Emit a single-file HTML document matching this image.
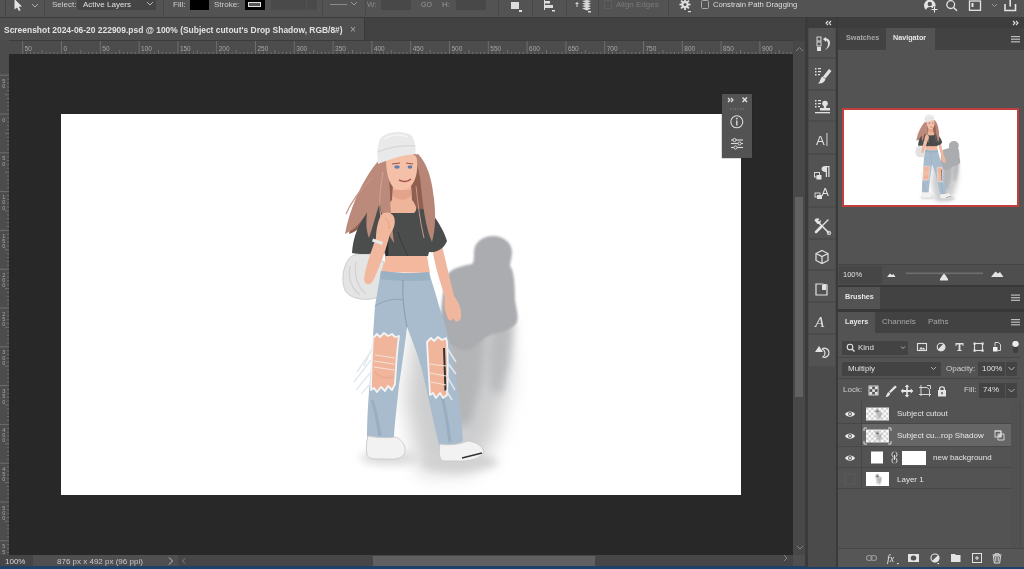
<!DOCTYPE html>
<html><head><meta charset="utf-8">
<style>
*{box-sizing:border-box;margin:0;padding:0}
html,body{width:1024px;height:569px;overflow:hidden;background:#535353;font-family:"Liberation Sans",sans-serif;color:#d6d6d6}
.a{position:absolute}
svg text{will-change:transform}
svg{will-change:transform}
.t{position:absolute;white-space:nowrap;font-size:8px;line-height:10px;will-change:transform}
</style></head><body>
<!-- options bar -->
<div class="a" style="left:0;top:0;width:1024px;height:18px;background:#535353"></div>
<div class="a" style="left:0;top:17px;width:1024px;height:1px;background:#3c3c3c"></div>
<!-- options content -->
<div class="a" style="left:5px;top:0;width:1px;height:16px;background:#444"></div>
<svg class="a" style="left:12px;top:0" width="14" height="12" viewBox="0 0 14 12"><path d="M2.5 -1 L2.5 9.5 L5 7.5 L7 11 L8.6 10.2 L6.8 6.8 L10 6.6 Z" fill="#e6e6e6"/></svg>
<svg class="a" style="left:31px;top:1px" width="8" height="8"><path d="M1 3 L4 6 L7 3" stroke="#b0b0b0" stroke-width="1" fill="none"/></svg>
<div class="a" style="left:44px;top:0;width:1px;height:16px;background:#484848"></div>
<div class="t" style="left:52px;top:0px;color:#d0d0d0">Select:</div>
<div class="a" style="left:77px;top:0;width:79px;height:10px;background:#454545"></div>
<div class="t" style="left:83px;top:0px;color:#e0e0e0">Active Layers</div>
<svg class="a" style="left:146px;top:0" width="8" height="8"><path d="M1 2 L4 5 L7 2" stroke="#b8b8b8" stroke-width="1" fill="none"/></svg>
<div class="a" style="left:163px;top:0;width:1px;height:16px;background:#484848"></div>
<div class="t" style="left:173px;top:0px;color:#d0d0d0">Fill:</div>
<div class="a" style="left:190px;top:0;width:19px;height:10px;background:#000"></div>
<div class="t" style="left:214px;top:0px;color:#d0d0d0">Stroke:</div>
<div class="a" style="left:245px;top:0;width:20px;height:10px;background:#000"></div>
<div class="a" style="left:248px;top:2px;width:13px;height:5px;border:1px solid #e0e0e0;background:#555"></div>
<div class="a" style="left:271px;top:0;width:35px;height:10px;background:#4a4a4a"></div>
<div class="a" style="left:307px;top:0;width:10px;height:10px;background:#4a4a4a"></div>
<div class="a" style="left:322px;top:0;width:1px;height:16px;background:#484848"></div>
<div class="a" style="left:330px;top:4px;width:17px;height:1px;background:#8a8a8a"></div>
<svg class="a" style="left:350px;top:0" width="8" height="8"><path d="M1 2 L4 5 L7 2" stroke="#9a9a9a" stroke-width="1" fill="none"/></svg>
<div class="a" style="left:365px;top:0;width:1px;height:16px;background:#484848"></div>
<div class="t" style="left:367px;top:0px;color:#8a8a8a">W:</div>
<div class="a" style="left:381px;top:0;width:30px;height:10px;background:#484848"></div>
<div class="t" style="left:421px;top:0px;color:#9a9a9a;font-size:7px">GO</div>
<div class="t" style="left:442px;top:0px;color:#9a9a9a">H:</div>
<div class="a" style="left:456px;top:0;width:30px;height:10px;background:#484848"></div>
<div class="a" style="left:498px;top:0;width:1px;height:16px;background:#484848"></div>
<div class="a" style="left:511px;top:2px;width:8px;height:7px;background:#dcdcdc"></div>
<div class="a" style="left:519px;top:10px;width:3px;height:2px;background:#ddd"></div>
<div class="a" style="left:532px;top:0;width:1px;height:16px;background:#484848"></div>
<svg class="a" style="left:543px;top:0" width="14" height="14"><g fill="#dcdcdc"><rect x="1" y="0" width="1" height="10"/><rect x="2" y="1" width="5" height="2.5"/><rect x="2" y="5" width="8" height="3"/><rect x="9" y="10" width="3" height="1.5"/></g></svg>
<div class="a" style="left:566px;top:0;width:1px;height:16px;background:#484848"></div>
<svg class="a" style="left:574px;top:0" width="18" height="14"><g fill="#d8d8d8"><path d="M1 4 L3 2 L5 4 Z"/><rect x="2.5" y="4" width="1" height="3"/><path d="M8 1 L13 0 L17 1 L13 3 Z"/><path d="M8 3.5 L13 2 L17 3.5 L13 5.5 Z"/><path d="M8 6 L13 4.5 L17 6 L13 8 Z"/><path d="M8 8.5 L13 7 L17 8.5 L13 10.5 Z"/><rect x="14" y="11" width="3" height="1.5"/></g></svg>
<div class="a" style="left:598px;top:0;width:1px;height:16px;background:#484848"></div>
<div class="a" style="left:604px;top:0;width:8px;height:9px;border:1px solid #5e5e5e;border-radius:1px"></div>
<div class="t" style="left:616px;top:0px;color:#7c7c7c">Align Edges</div>
<div class="a" style="left:668px;top:0;width:1px;height:16px;background:#484848"></div>
<svg class="a" style="left:679px;top:0" width="16" height="14"><g fill="#e0e0e0"><circle cx="6" cy="4.5" r="3.6"/><g stroke="#e0e0e0" stroke-width="1.8"><line x1="6" y1="-1" x2="6" y2="10"/><line x1="0.5" y1="4.5" x2="11.5" y2="4.5"/><line x1="2.1" y1="0.6" x2="9.9" y2="8.4"/><line x1="9.9" y1="0.6" x2="2.1" y2="8.4"/></g></g><circle cx="6" cy="4.5" r="1.5" fill="#535353"/><rect x="9" y="11" width="3" height="1.2" fill="#ddd"/></svg>
<div class="a" style="left:701px;top:0;width:8px;height:9px;border:1px solid #a8a8a8;border-radius:1.5px"></div>
<div class="t" style="left:713px;top:0px;color:#dedede;font-size:7.7px">Constrain Path Dragging</div>
<svg class="a" style="left:920px;top:0" width="104" height="14"><g fill="none" stroke="#e4e4e4" stroke-width="1.3">
<circle cx="30.7" cy="4.6" r="3.9" />
<line x1="33.5" y1="7.5" x2="37" y2="10.8" stroke-width="1.5"/>
<rect x="49.5" y="1" width="11" height="9.3"/>
<path d="M72 4 L74.5 6.5 L77 4" stroke="#9a9a9a" stroke-width="1"/>
<path d="M85 4 L85 10.5 L95.5 10.5 L95.5 4" stroke-width="1.6"/><line x1="90.2" y1="0" x2="90.2" y2="6.5" stroke-width="1.6"/>
</g><g fill="#e4e4e4"><circle cx="9.8" cy="5.5" r="5.8"/><rect x="51.5" y="3" width="2" height="4"/></g>
<g fill="#535353"><circle cx="9.8" cy="4" r="2.2"/><path d="M6 11.5 C6 8 8 7 9.8 7 C11.6 7 13.6 8 13.6 11.5 Z"/></g>
<path d="M14.5 6.5 L14.5 12.5 M11.5 9.5 L17.5 9.5" stroke="#535353" stroke-width="3"/><path d="M14.5 6.5 L14.5 12.5 M11.5 9.5 L17.5 9.5" stroke="#e4e4e4" stroke-width="1.1"/></svg>
<!-- doc tab bar -->
<div class="a" style="left:0;top:18px;width:806px;height:23px;background:#424242"></div>
<div class="a" style="left:0;top:18px;width:364px;height:22px;background:#4f4f4f"></div><div class="a" style="left:364px;top:18px;width:1px;height:22px;background:#393939"></div>
<div class="t" style="left:4px;top:25px;font-size:8.45px;font-weight:700;color:#e2e2e2;line-height:11px">Screenshot 2024-06-20 222909.psd @ 100% (Subject cutout's Drop Shadow, RGB/8#)</div>
<div class="t" style="left:350px;top:24px;font-size:10px;color:#a8a8a8;line-height:11px">×</div>
<div class="a" style="left:0;top:40px;width:793px;height:1px;background:#3c3c3c"></div>
<!-- rulers -->
<div class="a" style="left:0;top:41px;width:793px;height:13px;background:#4c4c4c"></div>
<div class="a" style="left:0;top:40px;width:9px;height:515px;background:#4c4c4c"></div>
<!-- canvas -->

<div class="a" style="left:9px;top:54px;width:784px;height:501px;background:#282828"></div>
<div class="a" style="left:61px;top:114px;width:680px;height:381px;background:#ffffff"></div>
<svg class="a" style="left:0;top:0" width="806" height="569"><g stroke="#7c7c7c" stroke-width="0.7"><line x1="22.7" y1="41" x2="22.7" y2="54"/><line x1="26.6" y1="52" x2="26.6" y2="54"/><line x1="30.5" y1="52" x2="30.5" y2="54"/><line x1="34.3" y1="52" x2="34.3" y2="54"/><line x1="38.2" y1="52" x2="38.2" y2="54"/><line x1="42.1" y1="50" x2="42.1" y2="54"/><line x1="46.0" y1="52" x2="46.0" y2="54"/><line x1="49.9" y1="52" x2="49.9" y2="54"/><line x1="53.7" y1="52" x2="53.7" y2="54"/><line x1="57.6" y1="52" x2="57.6" y2="54"/><line x1="61.5" y1="41" x2="61.5" y2="54"/><line x1="65.4" y1="52" x2="65.4" y2="54"/><line x1="69.3" y1="52" x2="69.3" y2="54"/><line x1="73.1" y1="52" x2="73.1" y2="54"/><line x1="77.0" y1="52" x2="77.0" y2="54"/><line x1="80.9" y1="50" x2="80.9" y2="54"/><line x1="84.8" y1="52" x2="84.8" y2="54"/><line x1="88.7" y1="52" x2="88.7" y2="54"/><line x1="92.5" y1="52" x2="92.5" y2="54"/><line x1="96.4" y1="52" x2="96.4" y2="54"/><line x1="100.3" y1="41" x2="100.3" y2="54"/><line x1="104.2" y1="52" x2="104.2" y2="54"/><line x1="108.1" y1="52" x2="108.1" y2="54"/><line x1="111.9" y1="52" x2="111.9" y2="54"/><line x1="115.8" y1="52" x2="115.8" y2="54"/><line x1="119.7" y1="50" x2="119.7" y2="54"/><line x1="123.6" y1="52" x2="123.6" y2="54"/><line x1="127.5" y1="52" x2="127.5" y2="54"/><line x1="131.3" y1="52" x2="131.3" y2="54"/><line x1="135.2" y1="52" x2="135.2" y2="54"/><line x1="139.1" y1="41" x2="139.1" y2="54"/><line x1="143.0" y1="52" x2="143.0" y2="54"/><line x1="146.9" y1="52" x2="146.9" y2="54"/><line x1="150.7" y1="52" x2="150.7" y2="54"/><line x1="154.6" y1="52" x2="154.6" y2="54"/><line x1="158.5" y1="50" x2="158.5" y2="54"/><line x1="162.4" y1="52" x2="162.4" y2="54"/><line x1="166.3" y1="52" x2="166.3" y2="54"/><line x1="170.1" y1="52" x2="170.1" y2="54"/><line x1="174.0" y1="52" x2="174.0" y2="54"/><line x1="177.9" y1="41" x2="177.9" y2="54"/><line x1="181.8" y1="52" x2="181.8" y2="54"/><line x1="185.7" y1="52" x2="185.7" y2="54"/><line x1="189.5" y1="52" x2="189.5" y2="54"/><line x1="193.4" y1="52" x2="193.4" y2="54"/><line x1="197.3" y1="50" x2="197.3" y2="54"/><line x1="201.2" y1="52" x2="201.2" y2="54"/><line x1="205.1" y1="52" x2="205.1" y2="54"/><line x1="208.9" y1="52" x2="208.9" y2="54"/><line x1="212.8" y1="52" x2="212.8" y2="54"/><line x1="216.7" y1="41" x2="216.7" y2="54"/><line x1="220.6" y1="52" x2="220.6" y2="54"/><line x1="224.5" y1="52" x2="224.5" y2="54"/><line x1="228.3" y1="52" x2="228.3" y2="54"/><line x1="232.2" y1="52" x2="232.2" y2="54"/><line x1="236.1" y1="50" x2="236.1" y2="54"/><line x1="240.0" y1="52" x2="240.0" y2="54"/><line x1="243.9" y1="52" x2="243.9" y2="54"/><line x1="247.7" y1="52" x2="247.7" y2="54"/><line x1="251.6" y1="52" x2="251.6" y2="54"/><line x1="255.5" y1="41" x2="255.5" y2="54"/><line x1="259.4" y1="52" x2="259.4" y2="54"/><line x1="263.3" y1="52" x2="263.3" y2="54"/><line x1="267.1" y1="52" x2="267.1" y2="54"/><line x1="271.0" y1="52" x2="271.0" y2="54"/><line x1="274.9" y1="50" x2="274.9" y2="54"/><line x1="278.8" y1="52" x2="278.8" y2="54"/><line x1="282.7" y1="52" x2="282.7" y2="54"/><line x1="286.5" y1="52" x2="286.5" y2="54"/><line x1="290.4" y1="52" x2="290.4" y2="54"/><line x1="294.3" y1="41" x2="294.3" y2="54"/><line x1="298.2" y1="52" x2="298.2" y2="54"/><line x1="302.1" y1="52" x2="302.1" y2="54"/><line x1="305.9" y1="52" x2="305.9" y2="54"/><line x1="309.8" y1="52" x2="309.8" y2="54"/><line x1="313.7" y1="50" x2="313.7" y2="54"/><line x1="317.6" y1="52" x2="317.6" y2="54"/><line x1="321.5" y1="52" x2="321.5" y2="54"/><line x1="325.3" y1="52" x2="325.3" y2="54"/><line x1="329.2" y1="52" x2="329.2" y2="54"/><line x1="333.1" y1="41" x2="333.1" y2="54"/><line x1="337.0" y1="52" x2="337.0" y2="54"/><line x1="340.9" y1="52" x2="340.9" y2="54"/><line x1="344.7" y1="52" x2="344.7" y2="54"/><line x1="348.6" y1="52" x2="348.6" y2="54"/><line x1="352.5" y1="50" x2="352.5" y2="54"/><line x1="356.4" y1="52" x2="356.4" y2="54"/><line x1="360.3" y1="52" x2="360.3" y2="54"/><line x1="364.1" y1="52" x2="364.1" y2="54"/><line x1="368.0" y1="52" x2="368.0" y2="54"/><line x1="371.9" y1="41" x2="371.9" y2="54"/><line x1="375.8" y1="52" x2="375.8" y2="54"/><line x1="379.7" y1="52" x2="379.7" y2="54"/><line x1="383.5" y1="52" x2="383.5" y2="54"/><line x1="387.4" y1="52" x2="387.4" y2="54"/><line x1="391.3" y1="50" x2="391.3" y2="54"/><line x1="395.2" y1="52" x2="395.2" y2="54"/><line x1="399.1" y1="52" x2="399.1" y2="54"/><line x1="402.9" y1="52" x2="402.9" y2="54"/><line x1="406.8" y1="52" x2="406.8" y2="54"/><line x1="410.7" y1="41" x2="410.7" y2="54"/><line x1="414.6" y1="52" x2="414.6" y2="54"/><line x1="418.5" y1="52" x2="418.5" y2="54"/><line x1="422.3" y1="52" x2="422.3" y2="54"/><line x1="426.2" y1="52" x2="426.2" y2="54"/><line x1="430.1" y1="50" x2="430.1" y2="54"/><line x1="434.0" y1="52" x2="434.0" y2="54"/><line x1="437.9" y1="52" x2="437.9" y2="54"/><line x1="441.7" y1="52" x2="441.7" y2="54"/><line x1="445.6" y1="52" x2="445.6" y2="54"/><line x1="449.5" y1="41" x2="449.5" y2="54"/><line x1="453.4" y1="52" x2="453.4" y2="54"/><line x1="457.3" y1="52" x2="457.3" y2="54"/><line x1="461.1" y1="52" x2="461.1" y2="54"/><line x1="465.0" y1="52" x2="465.0" y2="54"/><line x1="468.9" y1="50" x2="468.9" y2="54"/><line x1="472.8" y1="52" x2="472.8" y2="54"/><line x1="476.7" y1="52" x2="476.7" y2="54"/><line x1="480.5" y1="52" x2="480.5" y2="54"/><line x1="484.4" y1="52" x2="484.4" y2="54"/><line x1="488.3" y1="41" x2="488.3" y2="54"/><line x1="492.2" y1="52" x2="492.2" y2="54"/><line x1="496.1" y1="52" x2="496.1" y2="54"/><line x1="499.9" y1="52" x2="499.9" y2="54"/><line x1="503.8" y1="52" x2="503.8" y2="54"/><line x1="507.7" y1="50" x2="507.7" y2="54"/><line x1="511.6" y1="52" x2="511.6" y2="54"/><line x1="515.5" y1="52" x2="515.5" y2="54"/><line x1="519.3" y1="52" x2="519.3" y2="54"/><line x1="523.2" y1="52" x2="523.2" y2="54"/><line x1="527.1" y1="41" x2="527.1" y2="54"/><line x1="531.0" y1="52" x2="531.0" y2="54"/><line x1="534.9" y1="52" x2="534.9" y2="54"/><line x1="538.7" y1="52" x2="538.7" y2="54"/><line x1="542.6" y1="52" x2="542.6" y2="54"/><line x1="546.5" y1="50" x2="546.5" y2="54"/><line x1="550.4" y1="52" x2="550.4" y2="54"/><line x1="554.3" y1="52" x2="554.3" y2="54"/><line x1="558.1" y1="52" x2="558.1" y2="54"/><line x1="562.0" y1="52" x2="562.0" y2="54"/><line x1="565.9" y1="41" x2="565.9" y2="54"/><line x1="569.8" y1="52" x2="569.8" y2="54"/><line x1="573.7" y1="52" x2="573.7" y2="54"/><line x1="577.5" y1="52" x2="577.5" y2="54"/><line x1="581.4" y1="52" x2="581.4" y2="54"/><line x1="585.3" y1="50" x2="585.3" y2="54"/><line x1="589.2" y1="52" x2="589.2" y2="54"/><line x1="593.1" y1="52" x2="593.1" y2="54"/><line x1="596.9" y1="52" x2="596.9" y2="54"/><line x1="600.8" y1="52" x2="600.8" y2="54"/><line x1="604.7" y1="41" x2="604.7" y2="54"/><line x1="608.6" y1="52" x2="608.6" y2="54"/><line x1="612.5" y1="52" x2="612.5" y2="54"/><line x1="616.3" y1="52" x2="616.3" y2="54"/><line x1="620.2" y1="52" x2="620.2" y2="54"/><line x1="624.1" y1="50" x2="624.1" y2="54"/><line x1="628.0" y1="52" x2="628.0" y2="54"/><line x1="631.9" y1="52" x2="631.9" y2="54"/><line x1="635.7" y1="52" x2="635.7" y2="54"/><line x1="639.6" y1="52" x2="639.6" y2="54"/><line x1="643.5" y1="41" x2="643.5" y2="54"/><line x1="647.4" y1="52" x2="647.4" y2="54"/><line x1="651.3" y1="52" x2="651.3" y2="54"/><line x1="655.1" y1="52" x2="655.1" y2="54"/><line x1="659.0" y1="52" x2="659.0" y2="54"/><line x1="662.9" y1="50" x2="662.9" y2="54"/><line x1="666.8" y1="52" x2="666.8" y2="54"/><line x1="670.7" y1="52" x2="670.7" y2="54"/><line x1="674.5" y1="52" x2="674.5" y2="54"/><line x1="678.4" y1="52" x2="678.4" y2="54"/><line x1="682.3" y1="41" x2="682.3" y2="54"/><line x1="686.2" y1="52" x2="686.2" y2="54"/><line x1="690.1" y1="52" x2="690.1" y2="54"/><line x1="693.9" y1="52" x2="693.9" y2="54"/><line x1="697.8" y1="52" x2="697.8" y2="54"/><line x1="701.7" y1="50" x2="701.7" y2="54"/><line x1="705.6" y1="52" x2="705.6" y2="54"/><line x1="709.5" y1="52" x2="709.5" y2="54"/><line x1="713.3" y1="52" x2="713.3" y2="54"/><line x1="717.2" y1="52" x2="717.2" y2="54"/><line x1="721.1" y1="41" x2="721.1" y2="54"/><line x1="725.0" y1="52" x2="725.0" y2="54"/><line x1="728.9" y1="52" x2="728.9" y2="54"/><line x1="732.7" y1="52" x2="732.7" y2="54"/><line x1="736.6" y1="52" x2="736.6" y2="54"/><line x1="740.5" y1="50" x2="740.5" y2="54"/><line x1="744.4" y1="52" x2="744.4" y2="54"/><line x1="748.3" y1="52" x2="748.3" y2="54"/><line x1="752.1" y1="52" x2="752.1" y2="54"/><line x1="756.0" y1="52" x2="756.0" y2="54"/><line x1="759.9" y1="41" x2="759.9" y2="54"/><line x1="763.8" y1="52" x2="763.8" y2="54"/><line x1="767.7" y1="52" x2="767.7" y2="54"/><line x1="771.5" y1="52" x2="771.5" y2="54"/><line x1="775.4" y1="52" x2="775.4" y2="54"/><line x1="779.3" y1="50" x2="779.3" y2="54"/><line x1="783.2" y1="52" x2="783.2" y2="54"/><line x1="787.1" y1="52" x2="787.1" y2="54"/><line x1="790.9" y1="52" x2="790.9" y2="54"/><line x1="0" y1="75.2" x2="9" y2="75.2"/><line x1="7" y1="79.1" x2="9" y2="79.1"/><line x1="7" y1="83.0" x2="9" y2="83.0"/><line x1="7" y1="86.8" x2="9" y2="86.8"/><line x1="7" y1="90.7" x2="9" y2="90.7"/><line x1="5" y1="94.6" x2="9" y2="94.6"/><line x1="7" y1="98.5" x2="9" y2="98.5"/><line x1="7" y1="102.4" x2="9" y2="102.4"/><line x1="7" y1="106.2" x2="9" y2="106.2"/><line x1="7" y1="110.1" x2="9" y2="110.1"/><line x1="0" y1="114.0" x2="9" y2="114.0"/><line x1="7" y1="117.9" x2="9" y2="117.9"/><line x1="7" y1="121.8" x2="9" y2="121.8"/><line x1="7" y1="125.6" x2="9" y2="125.6"/><line x1="7" y1="129.5" x2="9" y2="129.5"/><line x1="5" y1="133.4" x2="9" y2="133.4"/><line x1="7" y1="137.3" x2="9" y2="137.3"/><line x1="7" y1="141.2" x2="9" y2="141.2"/><line x1="7" y1="145.0" x2="9" y2="145.0"/><line x1="7" y1="148.9" x2="9" y2="148.9"/><line x1="0" y1="152.8" x2="9" y2="152.8"/><line x1="7" y1="156.7" x2="9" y2="156.7"/><line x1="7" y1="160.6" x2="9" y2="160.6"/><line x1="7" y1="164.4" x2="9" y2="164.4"/><line x1="7" y1="168.3" x2="9" y2="168.3"/><line x1="5" y1="172.2" x2="9" y2="172.2"/><line x1="7" y1="176.1" x2="9" y2="176.1"/><line x1="7" y1="180.0" x2="9" y2="180.0"/><line x1="7" y1="183.8" x2="9" y2="183.8"/><line x1="7" y1="187.7" x2="9" y2="187.7"/><line x1="0" y1="191.6" x2="9" y2="191.6"/><line x1="7" y1="195.5" x2="9" y2="195.5"/><line x1="7" y1="199.4" x2="9" y2="199.4"/><line x1="7" y1="203.2" x2="9" y2="203.2"/><line x1="7" y1="207.1" x2="9" y2="207.1"/><line x1="5" y1="211.0" x2="9" y2="211.0"/><line x1="7" y1="214.9" x2="9" y2="214.9"/><line x1="7" y1="218.8" x2="9" y2="218.8"/><line x1="7" y1="222.6" x2="9" y2="222.6"/><line x1="7" y1="226.5" x2="9" y2="226.5"/><line x1="0" y1="230.4" x2="9" y2="230.4"/><line x1="7" y1="234.3" x2="9" y2="234.3"/><line x1="7" y1="238.2" x2="9" y2="238.2"/><line x1="7" y1="242.0" x2="9" y2="242.0"/><line x1="7" y1="245.9" x2="9" y2="245.9"/><line x1="5" y1="249.8" x2="9" y2="249.8"/><line x1="7" y1="253.7" x2="9" y2="253.7"/><line x1="7" y1="257.6" x2="9" y2="257.6"/><line x1="7" y1="261.4" x2="9" y2="261.4"/><line x1="7" y1="265.3" x2="9" y2="265.3"/><line x1="0" y1="269.2" x2="9" y2="269.2"/><line x1="7" y1="273.1" x2="9" y2="273.1"/><line x1="7" y1="277.0" x2="9" y2="277.0"/><line x1="7" y1="280.8" x2="9" y2="280.8"/><line x1="7" y1="284.7" x2="9" y2="284.7"/><line x1="5" y1="288.6" x2="9" y2="288.6"/><line x1="7" y1="292.5" x2="9" y2="292.5"/><line x1="7" y1="296.4" x2="9" y2="296.4"/><line x1="7" y1="300.2" x2="9" y2="300.2"/><line x1="7" y1="304.1" x2="9" y2="304.1"/><line x1="0" y1="308.0" x2="9" y2="308.0"/><line x1="7" y1="311.9" x2="9" y2="311.9"/><line x1="7" y1="315.8" x2="9" y2="315.8"/><line x1="7" y1="319.6" x2="9" y2="319.6"/><line x1="7" y1="323.5" x2="9" y2="323.5"/><line x1="5" y1="327.4" x2="9" y2="327.4"/><line x1="7" y1="331.3" x2="9" y2="331.3"/><line x1="7" y1="335.2" x2="9" y2="335.2"/><line x1="7" y1="339.0" x2="9" y2="339.0"/><line x1="7" y1="342.9" x2="9" y2="342.9"/><line x1="0" y1="346.8" x2="9" y2="346.8"/><line x1="7" y1="350.7" x2="9" y2="350.7"/><line x1="7" y1="354.6" x2="9" y2="354.6"/><line x1="7" y1="358.4" x2="9" y2="358.4"/><line x1="7" y1="362.3" x2="9" y2="362.3"/><line x1="5" y1="366.2" x2="9" y2="366.2"/><line x1="7" y1="370.1" x2="9" y2="370.1"/><line x1="7" y1="374.0" x2="9" y2="374.0"/><line x1="7" y1="377.8" x2="9" y2="377.8"/><line x1="7" y1="381.7" x2="9" y2="381.7"/><line x1="0" y1="385.6" x2="9" y2="385.6"/><line x1="7" y1="389.5" x2="9" y2="389.5"/><line x1="7" y1="393.4" x2="9" y2="393.4"/><line x1="7" y1="397.2" x2="9" y2="397.2"/><line x1="7" y1="401.1" x2="9" y2="401.1"/><line x1="5" y1="405.0" x2="9" y2="405.0"/><line x1="7" y1="408.9" x2="9" y2="408.9"/><line x1="7" y1="412.8" x2="9" y2="412.8"/><line x1="7" y1="416.6" x2="9" y2="416.6"/><line x1="7" y1="420.5" x2="9" y2="420.5"/><line x1="0" y1="424.4" x2="9" y2="424.4"/><line x1="7" y1="428.3" x2="9" y2="428.3"/><line x1="7" y1="432.2" x2="9" y2="432.2"/><line x1="7" y1="436.0" x2="9" y2="436.0"/><line x1="7" y1="439.9" x2="9" y2="439.9"/><line x1="5" y1="443.8" x2="9" y2="443.8"/><line x1="7" y1="447.7" x2="9" y2="447.7"/><line x1="7" y1="451.6" x2="9" y2="451.6"/><line x1="7" y1="455.4" x2="9" y2="455.4"/><line x1="7" y1="459.3" x2="9" y2="459.3"/><line x1="0" y1="463.2" x2="9" y2="463.2"/><line x1="7" y1="467.1" x2="9" y2="467.1"/><line x1="7" y1="471.0" x2="9" y2="471.0"/><line x1="7" y1="474.8" x2="9" y2="474.8"/><line x1="7" y1="478.7" x2="9" y2="478.7"/><line x1="5" y1="482.6" x2="9" y2="482.6"/><line x1="7" y1="486.5" x2="9" y2="486.5"/><line x1="7" y1="490.4" x2="9" y2="490.4"/><line x1="7" y1="494.2" x2="9" y2="494.2"/><line x1="7" y1="498.1" x2="9" y2="498.1"/><line x1="0" y1="502.0" x2="9" y2="502.0"/><line x1="7" y1="505.9" x2="9" y2="505.9"/><line x1="7" y1="509.8" x2="9" y2="509.8"/><line x1="7" y1="513.6" x2="9" y2="513.6"/><line x1="7" y1="517.5" x2="9" y2="517.5"/><line x1="5" y1="521.4" x2="9" y2="521.4"/><line x1="7" y1="525.3" x2="9" y2="525.3"/><line x1="7" y1="529.2" x2="9" y2="529.2"/><line x1="7" y1="533.0" x2="9" y2="533.0"/><line x1="7" y1="536.9" x2="9" y2="536.9"/><line x1="0" y1="540.8" x2="9" y2="540.8"/><line x1="7" y1="544.7" x2="9" y2="544.7"/><line x1="7" y1="548.6" x2="9" y2="548.6"/><line x1="7" y1="552.4" x2="9" y2="552.4"/></g><g fill="#a6a6a6" font-size="6.5" font-family="Liberation Sans"><text x="24.7" y="50.5">50</text><text x="63.5" y="50.5">0</text><text x="102.3" y="50.5">50</text><text x="141.1" y="50.5">100</text><text x="179.9" y="50.5">150</text><text x="218.7" y="50.5">200</text><text x="257.5" y="50.5">250</text><text x="296.3" y="50.5">300</text><text x="335.1" y="50.5">350</text><text x="373.9" y="50.5">400</text><text x="412.7" y="50.5">450</text><text x="451.5" y="50.5">500</text><text x="490.3" y="50.5">550</text><text x="529.1" y="50.5">600</text><text x="567.9" y="50.5">650</text><text x="606.7" y="50.5">700</text><text x="645.5" y="50.5">750</text><text x="684.3" y="50.5">800</text><text x="723.1" y="50.5">850</text><text x="761.9" y="50.5">900</text><text x="3.8" text-anchor="middle" y="82.7" font-size="5.5">5</text><text x="3.8" text-anchor="middle" y="87.9" font-size="5.5">0</text><text x="3.8" text-anchor="middle" y="121.5" font-size="5.5">0</text><text x="3.8" text-anchor="middle" y="160.3" font-size="5.5">5</text><text x="3.8" text-anchor="middle" y="165.5" font-size="5.5">0</text><text x="3.8" text-anchor="middle" y="199.1" font-size="5.5">1</text><text x="3.8" text-anchor="middle" y="204.3" font-size="5.5">0</text><text x="3.8" text-anchor="middle" y="209.5" font-size="5.5">0</text><text x="3.8" text-anchor="middle" y="237.9" font-size="5.5">1</text><text x="3.8" text-anchor="middle" y="243.1" font-size="5.5">5</text><text x="3.8" text-anchor="middle" y="248.3" font-size="5.5">0</text><text x="3.8" text-anchor="middle" y="276.7" font-size="5.5">2</text><text x="3.8" text-anchor="middle" y="281.9" font-size="5.5">0</text><text x="3.8" text-anchor="middle" y="287.1" font-size="5.5">0</text><text x="3.8" text-anchor="middle" y="315.5" font-size="5.5">2</text><text x="3.8" text-anchor="middle" y="320.7" font-size="5.5">5</text><text x="3.8" text-anchor="middle" y="325.9" font-size="5.5">0</text><text x="3.8" text-anchor="middle" y="354.3" font-size="5.5">3</text><text x="3.8" text-anchor="middle" y="359.5" font-size="5.5">0</text><text x="3.8" text-anchor="middle" y="364.7" font-size="5.5">0</text><text x="3.8" text-anchor="middle" y="393.1" font-size="5.5">3</text><text x="3.8" text-anchor="middle" y="398.3" font-size="5.5">5</text><text x="3.8" text-anchor="middle" y="403.5" font-size="5.5">0</text><text x="3.8" text-anchor="middle" y="431.9" font-size="5.5">4</text><text x="3.8" text-anchor="middle" y="437.1" font-size="5.5">0</text><text x="3.8" text-anchor="middle" y="442.3" font-size="5.5">0</text><text x="3.8" text-anchor="middle" y="470.7" font-size="5.5">4</text><text x="3.8" text-anchor="middle" y="475.9" font-size="5.5">5</text><text x="3.8" text-anchor="middle" y="481.1" font-size="5.5">0</text><text x="3.8" text-anchor="middle" y="509.5" font-size="5.5">5</text><text x="3.8" text-anchor="middle" y="514.7" font-size="5.5">0</text><text x="3.8" text-anchor="middle" y="519.9" font-size="5.5">0</text><text x="3.8" text-anchor="middle" y="548.3" font-size="5.5">5</text><text x="3.8" text-anchor="middle" y="553.5" font-size="5.5">5</text><text x="3.8" text-anchor="middle" y="558.7" font-size="5.5">0</text></g></svg>
<!-- figure -->
<svg class="a" style="left:61px;top:114px" width="680" height="381" viewBox="61 114 680 381">
<defs>
<filter id="b1" x="-50%" y="-50%" width="200%" height="200%"><feGaussianBlur stdDeviation="1.3"/></filter>
<filter id="b2" x="-50%" y="-50%" width="200%" height="200%"><feGaussianBlur stdDeviation="10"/></filter>
<filter id="b3" x="-50%" y="-50%" width="200%" height="200%"><feGaussianBlur stdDeviation="4"/></filter>
<filter id="b4" x="-50%" y="-50%" width="200%" height="200%"><feGaussianBlur stdDeviation="0.5"/></filter>
<g id="fig">
<!-- soft shadow lower -->
<path d="M415 320 L505 320 L510 380 L495 440 L470 472 L420 472 L405 400 Z" fill="#cdcecf" filter="url(#b2)"/>
<ellipse cx="460" cy="462" rx="38" ry="9" fill="#d2d2d2" filter="url(#b3)"/>
<ellipse cx="390" cy="458" rx="30" ry="7" fill="#dadada" filter="url(#b3)"/>
<!-- shadow core -->
<path d="M446 330 L486 330 L482 380 L470 425 L450 425 L444 380 Z" fill="#b4b5b7" filter="url(#b3)"/>
<path d="M492 326 L514 322 L510 360 L500 395 L490 390 L488 350 Z" fill="#babbbd" filter="url(#b3)"/>
<path d="M493 236 C504 236 512 243 512 252 C512 258 510 262 510 266 C514 270 515 285 515 300 C516 308 519 316 517 322 C514 328 504 332 494 334 C484 336 478 345 470 350 C460 352 448 345 442 334 C440 310 442 290 448 274 C452 268 462 266 472 264 C474 262 474 258 474 252 C474 243 482 236 493 236 Z" fill="#aaacaf" filter="url(#b1)"/>
<!-- bag -->
<path d="M352 256 C343 262 340 282 346 292 C353 301 372 301 381 296 L384 262 C373 253 361 252 352 256 Z" fill="#e4e4e4" stroke="#c4c4c4" stroke-width="0.8"/>
<path d="M350 266 C348 278 351 288 360 295 M356 262 C354 274 357 286 366 294" stroke="#d2d2d2" fill="none" stroke-width="1.2"/>
<!-- hair back -->
<path d="M384 158 C374 170 366 186 361 200 C356 212 351 224 349 234 C358 231 366 224 372 214 L392 208 L414 208 C418 220 424 232 431 241 C434 226 433 206 430 190 C427 172 421 160 415 154 Z" fill="#8f5f50"/>
<!-- right arm (image right) -->
<path d="M432 248 L442 246 C446 262 450 280 454 296 C459 302 462 310 461 318 C459 323 455 322 453 318 C452 322 448 321 447 316 C444 308 444 302 445 297 C440 282 435 266 432 248 Z" fill="#f1b79e"/>
<!-- shirt -->
<path d="M372 207 C378 204 383 206 387 209 C395 214 407 214 414 209 C421 208 428 210 432 214 C439 222 444 232 447 241 C444 249 436 253 429 252 L428 256 C413 259 399 259 386 257 L384 252 C372 254 361 255 352 253 C353 238 358 222 372 207 Z" fill="#4b4c4c"/>
<path d="M398 232 C400 240 404 248 408 256" stroke="#3a3b3b" stroke-width="1" fill="none"/>
<!-- strap -->
<path d="M380 206 C384 214 386 224 387 236 L387 266 L382 296" stroke="#2a2a2a" stroke-width="2.5" fill="none"/>
<!-- neck -->
<path d="M393 184 L411 184 L412 200 C416 205 418 210 414 213 L386 213 C384 209 388 205 392 200 Z" fill="#efb59b"/><path d="M393 196 C399 201 406 201 411 196 L411 190 L393 190 Z" fill="#e3a48b"/>
<!-- hair front left strands -->
<path d="M380 159 C370 170 362 184 356 198 C351 210 347 222 345 234 C354 230 362 222 367 212 C366 222 366 230 369 238 C373 226 376 214 380 202 C381 216 385 230 394 243 C392 226 390 208 390 192 C389 180 388 170 389 160 Z" fill="#bb8a7a"/>
<path d="M372 178 C362 188 352 200 346 214" stroke="#c49584" stroke-width="1.2" fill="none"/>
<path d="M383 172 C380 190 378 206 382 222" stroke="#d0a595" stroke-width="1" fill="none"/>
<!-- hair front right -->
<path d="M414 155 C419 168 421 182 422 196 C424 212 426 228 432 242 C436 228 436 210 433 192 C431 176 426 162 418 154 Z" fill="#b88676"/>
<path d="M416 186 C418 204 420 222 424 238" stroke="#c89a8a" stroke-width="1" fill="none"/>
<!-- left arm (image left) -->
<path d="M381 215 C385 211 392 212 394 217 C396 223 394 229 390 234 C386 250 380 266 373 281 C370 286 365 285 364 280 C365 268 371 252 376 238 C376 230 378 221 381 215 Z" fill="#f2b89e"/>
<path d="M385 218 C388 221 390 224 389 229" stroke="#d99a80" stroke-width="0.8" fill="none"/>
<path d="M372.5 240 L382.5 243.5" stroke="#e8e8e8" stroke-width="3"/>
<!-- midriff -->
<path d="M386 256 L427 256 C428 262 429 268 430 273 L381 272 C383 266 385 262 386 256 Z" fill="#f3b89d"/>
<!-- face -->
<path d="M386 160 C386 150 417 148 417 160 C418 171 416 180 411 186 C405 191 398 191 393 187 C388 181 386 170 386 160 Z" fill="#f5c0a8"/>
<path d="M392 164 L400 163 M406 163 L413 164" stroke="#9a5545" stroke-width="1"/>
<ellipse cx="397" cy="167" rx="2.8" ry="1.8" fill="#5f80b0"/><ellipse cx="410" cy="167" rx="2.4" ry="1.8" fill="#5f80b0"/>
<path d="M399 180 C403 182 408 182 411 179" stroke="#a85550" stroke-width="1.6" fill="none"/>
<!-- beanie -->
<path d="M380 139 C385 131 403 130 411 135 C415 140 416 147 415.5 154 C403 155 390 159 378 164 C377 154 377 146 380 139 Z" fill="#e9e9e9"/>
<path d="M377.5 152 C390 147 403 145 415.5 146" stroke="#d2d2d2" stroke-width="1" fill="none"/>
<path d="M384 139 C392 134 402 134 408 137" stroke="#f4f4f4" stroke-width="1.5" fill="none"/>
<!-- jeans -->
<path d="M381 271 C396 273 414 274 429 272 C432 283 436 294 439 306 C446 325 452 350 456 380 C459 400 462 420 463 441 C456 446 446 447 439 445 C433 420 428 395 422 370 C418 355 412 340 407 327 C405 345 402 365 399 385 C397 405 395 420 394 437 C385 440 375 440 367 437 C367 410 370 380 372 355 C373 335 374 320 375 306 C377 295 379 282 381 271 Z" fill="#a9bccd"/>
<path d="M381 271 C396 273 414 274 429 272 L430 280 C414 282 396 281 380 279 Z" fill="#9ab0c3"/>
<path d="M407 327 C404 312 402 295 403 280" stroke="#8aa0b4" stroke-width="1.2" fill="none"/>
<path d="M375 306 C385 300 395 298 403 300" stroke="#8ca2b6" stroke-width="1" fill="none"/>
<path d="M372 400 C376 410 378 425 380 436" stroke="#8aa0b4" stroke-width="3" fill="none" opacity="0.5"/>
<path d="M430 360 C440 380 446 410 450 442" stroke="#8aa0b4" stroke-width="3" fill="none" opacity="0.5"/>
<!-- rips -->
<path d="M357 372 L372 350 M354 382 L371 360 M356 390 L371 372 M361 394 L372 382 M364 366 L373 346" stroke="#e4e9ee" stroke-width="1.5" filter="url(#b4)"/>
<path d="M373 338 L377 334 L380 337 L384 333 L388 336 L392 334 L395 337 L399 336 C397 350 396 366 395 384 L392 390 L388 386 L385 391 L381 387 L377 392 L374 388 L371 390 C371 372 372 354 373 338 Z" fill="#f1b59c" stroke="#f2f4f6" stroke-width="1.8" stroke-linejoin="round"/>
<path d="M375 355 L395 358 M374 361 L394 364 M374 367 L394 370" stroke="#f6e2d6" stroke-width="1.1"/>
<path d="M375 372 C380 378 388 380 394 376" stroke="#e9a68c" stroke-width="2" fill="none" opacity="0.6"/>
<path d="M427 342 L431 338 L434 341 L438 337 L442 340 L446 338 L447 342 C448 360 448 378 447 395 L443 398 L440 393 L436 398 L433 393 L430 395 C429 378 428 360 427 342 Z" fill="#f1b59c" stroke="#f2f4f6" stroke-width="1.8" stroke-linejoin="round"/>
<path d="M444 348 L445.5 391" stroke="#2f3236" stroke-width="2"/>
<path d="M447 348 L456 362 M447 362 L456 374 M447 376 L455 390 M446 390 L452 400" stroke="#e4e9ee" stroke-width="1.5" filter="url(#b4)"/>
<path d="M429 364 L446 366 M430 373 L446 376 M431 382 L446 385" stroke="#f6e2d6" stroke-width="1.1"/>
<!-- shoes -->
<path d="M368 436 C378 438 390 438 396 437 C402 440 406 445 405 452 C404 458 396 460 388 459 L375 459 C372 459 368 458 367 455 C366 450 366 443 368 436 Z" fill="#f2f2f2" stroke="#c8c8c8" stroke-width="0.9"/>
<path d="M440 444 C450 446 460 444 468 441 C476 442 483 446 484 452 C482 458 470 462 455 461 L444 461 C440 460 438 455 440 444 Z" fill="#f2f2f2" stroke="#c8c8c8" stroke-width="0.9"/>
<path d="M462 458 L482 453" stroke="#333" stroke-width="1.6"/>
</g>
</defs>
<use href="#fig"/>
</svg>
<!-- v scrollbar -->
<div class="a" style="left:793px;top:41px;width:12px;height:514px;background:#484848"></div>
<div class="a" style="left:795px;top:197px;width:8px;height:200px;background:#616161"></div>
<!-- status bar -->
<div class="a" style="left:0;top:555px;width:806px;height:12px;background:#4f4f4f"></div>
<div class="a" style="left:0;top:555px;width:33px;height:12px;background:#454545"></div>
<div class="t" style="left:5px;top:557px;color:#d8d8d8">100%</div>
<div class="t" style="left:57px;top:557px;color:#c8c8c8">876 px x 492 px (96 ppi)</div>
<div class="a" style="left:178px;top:555px;width:615px;height:12px;background:#464646"></div>
<div class="a" style="left:373px;top:556px;width:222px;height:10px;background:#606060"></div>
<svg class="a" style="left:166px;top:555px" width="24" height="12"><path d="M3 2.5 L6.5 6 L3 9.5" stroke="#c8c8c8" fill="none" stroke-width="1"/><path d="M19 3.5 L16.5 6 L19 8.5" stroke="#8a8a8a" fill="none" stroke-width="0.9"/></svg>
<svg class="a" style="left:780px;top:41px" width="26" height="526"><path d="M4 514 L7 517 L4 520" stroke="#8a8a8a" fill="none" stroke-width="0.9"/><path d="M17 505 L20 508 L23 505" stroke="#8a8a8a" fill="none" stroke-width="0.9"/><path d="M16 10 L19.5 6.5 L23 10" stroke="#8a8a8a" fill="none" stroke-width="0.9"/></svg>
<div class="a" style="left:0;top:566px;width:1024px;height:3px;background:#1e416a"></div>
<!-- divider -->
<div class="a" style="left:805px;top:18px;width:3px;height:549px;background:#3a3a3a"></div>
<!-- icon column -->
<div class="a" style="left:808px;top:18px;width:28px;height:549px;background:#535353"></div>
<div class="a" style="left:808px;top:18px;width:28px;height:10px;background:#3d3d3d"></div>
<div class="a" style="left:836px;top:18px;width:2px;height:549px;background:#3a3a3a"></div>
<!-- icon buttons -->
<div class="a" style="left:808px;top:28px;width:28px;height:539px;background:#4b4b4b"></div>
<div class="a" style="left:809px;top:28px;width:26px;height:29px;background:#535353"></div>
<div class="a" style="left:809px;top:59px;width:26px;height:30px;background:#535353"></div>
<div class="a" style="left:809px;top:91px;width:26px;height:29px;background:#535353"></div>
<div class="a" style="left:809px;top:122px;width:26px;height:31px;background:#535353"></div>
<div class="a" style="left:809px;top:155px;width:26px;height:51px;background:#535353"></div>
<div class="a" style="left:809px;top:208px;width:26px;height:30px;background:#535353"></div>
<div class="a" style="left:809px;top:240px;width:26px;height:29px;background:#535353"></div>
<div class="a" style="left:809px;top:271px;width:26px;height:30px;background:#535353"></div>
<div class="a" style="left:809px;top:303px;width:26px;height:30px;background:#535353"></div>
<div class="a" style="left:809px;top:335px;width:26px;height:31px;background:#535353"></div>
<svg class="a" style="left:808px;top:28px" width="28" height="340" viewBox="808 28 28 340">
<g fill="#e2e2e2" stroke="none">
<!-- history -->
<rect x="817" y="37" width="4" height="4" fill="none" stroke="#e2e2e2" stroke-width="0.9"/>
<rect x="817" y="42" width="4" height="4" fill="none" stroke="#e2e2e2" stroke-width="0.9"/>
<rect x="817" y="47" width="4" height="4"/>
<path d="M823 39 L826 37 L826 38.5 C829 38.5 830 41 830 43 C830 46 828 49 824.5 50.5 C827 48.5 828 46 828 44 C828 42 827 40.5 826 40.5 L826 42 Z"/>
<!-- brush presets -->
<rect x="815" y="68" width="1.5" height="1.5"/><rect x="818" y="68" width="3" height="1.2"/>
<rect x="815" y="71" width="1.5" height="1.5"/><rect x="818" y="71" width="3" height="1.2"/>
<rect x="815" y="74" width="1.5" height="1.5"/><rect x="818" y="74" width="2" height="1.2"/>
<path d="M829 69 L831.5 71 L825.5 78.5 L823 76.5 Z"/><path d="M822.5 76.5 L825.5 79 C825 82 822 84 818 83.5 C820.5 82 820 78 822.5 76.5 Z"/>
<!-- clone source -->
<rect x="815" y="100" width="1.5" height="1.5"/><rect x="818" y="100" width="3" height="1.2"/>
<rect x="815" y="103" width="1.5" height="1.5"/><rect x="818" y="103" width="3" height="1.2"/>
<rect x="815" y="106" width="1.5" height="1.5"/><rect x="818" y="106" width="2" height="1.2"/>
<circle cx="825" cy="103.5" r="2.8"/><rect x="823.8" y="105" width="2.4" height="3"/><rect x="820" y="108" width="10" height="2.5"/><rect x="815" y="112" width="15" height="1.3"/>
<!-- character -->
<text x="816" y="145" font-size="13" font-family="Liberation Sans" fill="#e2e2e2">A</text><rect x="826.5" y="133" width="0.9" height="13"/>
<!-- paragraph styles -->
<rect x="814.5" y="172.5" width="5" height="4.5" fill="none" stroke="#e2e2e2" stroke-width="0.9"/><rect x="816.5" y="175" width="5" height="4.5"/>
<path d="M822 166 L829.5 166 L829.5 177 L828.3 177 L828.3 167.2 L827 167.2 L827 177 L825.8 177 L825.8 172 C823 172 821.5 170.5 821.5 169 C821.5 167 823 166 825.5 166 Z"/>
<!-- character styles -->
<rect x="815" y="193" width="5" height="4" fill="none" stroke="#e2e2e2" stroke-width="0.9"/><rect x="817" y="195" width="5" height="4"/>
<text x="821.5" y="196" font-size="11" font-family="Liberation Sans" fill="#e2e2e2">A</text>
<!-- scissors -->
<g stroke="#e2e2e2" stroke-linecap="round"><line x1="818" y1="222" x2="829" y2="233" stroke-width="1.6"/><line x1="828" y1="220" x2="821" y2="227" stroke-width="1.4"/><line x1="821" y1="227" x2="816" y2="232" stroke-width="2.6"/></g>
<path d="M814.5 220.5 C815 218 818 217.5 819.5 219 L818 220.5 L819 221.5 L820.5 220 C821.5 222 820 224.5 817.5 224 Z"/><circle cx="829" cy="233" r="1.8" fill="none" stroke="#e2e2e2" stroke-width="0.9"/>
<!-- cube -->
<g transform="translate(0,2.5)"><path d="M822 248 L828 251 L828 258 L822 261 L816 258 L816 251 Z" fill="none" stroke="#e2e2e2" stroke-width="1.2"/>
<path d="M816 251 L822 254 L828 251 M822 254 L822 261" fill="none" stroke="#e2e2e2" stroke-width="1.2"/></g>
<!-- libraries -->
<g transform="translate(0,2)"><path d="M816 282 L822 282 L827 283 L827 293 L822 293 L816 293 Z" fill="none" stroke="#e2e2e2" stroke-width="1.2"/><rect x="822" y="283" width="4" height="5"/></g>
<!-- glyphs -->
<text x="815" y="327" font-size="15" font-style="italic" font-family="Liberation Serif" fill="#e2e2e2">A</text>
<!-- properties -->
<path d="M819 346 L823 352 L815 352 Z"/><path d="M822 349 A4.5 4.5 0 1 1 823 357 A4.5 4.5 0 0 0 822 349" fill="none" stroke="#e2e2e2" stroke-width="1.2"/>
</g></svg>
<!-- floating panel -->
<div class="a" style="left:722px;top:94px;width:30px;height:64px;background:#535353;box-shadow:0 0 1px #222"></div>
<svg class="a" style="left:722px;top:95px" width="30" height="10"><g fill="none" stroke="#e4e4e4" stroke-width="1.1"><path d="M6 3 L8 5 L6 7 M9 3 L11 5 L9 7"/><path d="M20.5 2.5 L25 7 M25 2.5 L20.5 7" stroke-width="1.4"/></g><g fill="#8a8a8a"><rect x="11" y="12" width="1" height="0.8"/></g></svg>
<svg class="a" style="left:722px;top:104px" width="30" height="54" viewBox="722 104 30 54"><g stroke="#dcdcdc" fill="none" stroke-width="1.1"><circle cx="736.8" cy="121.8" r="6"/><line x1="736.8" y1="120.5" x2="736.8" y2="125.5" stroke-width="1.4"/><line x1="731" y1="140" x2="743" y2="140"/><line x1="731" y1="143.5" x2="743" y2="143.5"/><line x1="731" y1="147.5" x2="743" y2="147.5"/></g><g fill="#535353" stroke="#dcdcdc" stroke-width="1"><circle cx="734.5" cy="140" r="1.6"/><circle cx="739.5" cy="143.5" r="1.6"/><circle cx="735.5" cy="147.5" r="1.6"/></g><circle cx="736.8" cy="118.6" r="0.9" fill="#dcdcdc"/><g fill="#8a8a8a"><rect x="730" y="108.5" width="1" height="1"/><rect x="732.5" y="108.5" width="1" height="1"/><rect x="735" y="108.5" width="1" height="1"/><rect x="737.5" y="108.5" width="1" height="1"/><rect x="740" y="108.5" width="1" height="1"/><rect x="742.5" y="108.5" width="1" height="1"/></g></svg>

<!-- panel -->
<div class="a" style="left:838px;top:18px;width:186px;height:549px;background:#535353"></div>
<div class="a" style="left:838px;top:18px;width:186px;height:10px;background:#3d3d3d"></div>
<div class="a" style="left:838px;top:28px;width:186px;height:22px;background:#424242"></div>
<div class="a" style="left:886px;top:28px;width:49px;height:22px;background:#535353"></div>
<div class="t" style="left:846px;top:33px;font-size:7.2px;font-weight:700;color:#a8a8a8">Swatches</div>
<div class="t" style="left:893px;top:33px;font-size:7.2px;font-weight:700;color:#e8e8e8">Navigator</div>
<!-- navigator preview -->
<div class="a" style="left:842px;top:108px;width:177px;height:99px;border:2px solid #c03e3e;background:#fff"></div>
<svg class="a" style="left:844px;top:110px" width="173" height="97" viewBox="61 114 680 381"><use href="#fig"/></svg>

<!-- nav slider -->
<div class="a" style="left:838px;top:264px;width:186px;height:1px;background:#444"></div>
<div class="a" style="left:838px;top:265px;width:186px;height:20px;background:#4e4e4e"></div>
<div class="a" style="left:839px;top:266px;width:43px;height:18px;background:#464646"></div>
<div class="t" style="left:843px;top:270px;color:#e0e0e0;font-size:7.5px">100%</div>
<svg class="a" style="left:884px;top:265px" width="140" height="20" viewBox="884 265 140 20"><g fill="#e4e4e4"><path d="M887 277 L890 273.5 L892 275 L893.5 274 L895.5 277 Z"/><path d="M991 277 L995.5 271.5 L998 273.5 L1000 272 L1003.5 277 Z"/><path d="M944 273 L948 279 L940 279 Z"/><rect x="940" y="279" width="8" height="1.5"/></g><rect x="906" y="272.5" width="77" height="1.6" fill="#6e6e6e"/></svg>
<div class="a" style="left:838px;top:285px;width:186px;height:2px;background:#383838"></div>
<!-- brushes header -->
<div class="a" style="left:838px;top:287px;width:186px;height:22px;background:#424242"></div>
<div class="a" style="left:838px;top:287px;width:42px;height:22px;background:#535353"></div>
<div class="t" style="left:845px;top:292px;font-size:7.2px;font-weight:700;color:#e8e8e8">Brushes</div>
<div class="a" style="left:838px;top:309px;width:186px;height:3px;background:#383838"></div>
<!-- layers tabs -->
<div class="a" style="left:838px;top:312px;width:186px;height:21px;background:#424242"></div>
<div class="a" style="left:838px;top:312px;width:37px;height:21px;background:#535353"></div>
<div class="t" style="left:845px;top:317px;font-size:7.2px;font-weight:700;color:#e8e8e8">Layers</div>
<div class="t" style="left:882px;top:317px;color:#a6a6a6">Channels</div>
<div class="t" style="left:928px;top:317px;color:#a6a6a6">Paths</div>
<svg class="a" style="left:1010px;top:28px" width="12" height="320" viewBox="1010 28 12 320"><g fill="#bdbdbd"><rect x="1011" y="36" width="9" height="1.2"/><rect x="1011" y="38.6" width="9" height="1.2"/><rect x="1011" y="41.2" width="9" height="1.2"/>
<rect x="1011" y="294.5" width="9" height="1.2"/><rect x="1011" y="297.1" width="9" height="1.2"/><rect x="1011" y="299.7" width="9" height="1.2"/>
<rect x="1011" y="319" width="9" height="1.2"/><rect x="1011" y="321.6" width="9" height="1.2"/><rect x="1011" y="324.2" width="9" height="1.2"/></g></svg>
<!-- layers controls -->
<div class="a" style="left:842px;top:341px;width:66px;height:14px;background:#434343;border-radius:1px"></div>
<svg class="a" style="left:842px;top:341px" width="182" height="60" viewBox="842 341 182 60"><g fill="none" stroke="#e0e0e0" stroke-width="1.1"><circle cx="850" cy="347" r="2.8"/><line x1="852" y1="349" x2="854.5" y2="351.5" stroke-width="1.4"/>
<path d="M901 346.5 L903 348.5 L905 346.5" stroke="#bbb" stroke-width="0.9"/>
<rect x="917.5" y="343.5" width="9" height="7"/>
<circle cx="941" cy="347" r="3.8"/>
<rect x="974.5" y="343.5" width="8" height="7"/>
<path d="M943.7 344.3 A3.8 3.8 0 0 1 938.3 349.7 Z" fill="#e0e0e0"/>
<path d="M915 367 L917 369 L919 367" transform="translate(20,0)" stroke="#bbb" stroke-width="0.9"/>
<path d="M1009.5 368 L1011.5 370 L1013.5 368" stroke="#bbb" stroke-width="0.9"/>
<path d="M1009.5 389 L1011.5 391 L1013.5 389" stroke="#bbb" stroke-width="0.9"/>
</g><g fill="#e0e0e0"><path d="M919 349.5 L921 347 L922.5 348.5 L923.5 347.5 L925.5 349.5 Z"/>
<path d="M955.5 343 L963.5 343 L963.5 346 L962.7 346 L962.5 344.5 L960.4 344.5 L960.4 350 L961.8 350.3 L961.8 351 L957.2 351 L957.2 350.3 L958.6 350 L958.6 344.5 L956.5 344.5 L956.3 346 L955.5 346 Z"/>
<rect x="973.5" y="342.5" width="2.2" height="2.2"/><rect x="981.5" y="342.5" width="2.2" height="2.2"/><rect x="973.5" y="349.5" width="2.2" height="2.2"/><rect x="981.5" y="349.5" width="2.2" height="2.2"/>
<path d="M995 342.5 L998.5 342.5 L1000.5 344.5 L1000.5 350.5 L995 350.5 Z" fill="none" stroke="#e0e0e0" stroke-width="0.9"/><rect x="992.5" y="346.5" width="5" height="5" fill="#535353"/><rect x="993" y="347" width="4.5" height="4.5" fill="#f0f0f0"/>
<circle cx="1015.5" cy="344" r="3" fill="#ececec"/><rect x="1013" y="344" width="5" height="9" rx="2.5" fill="#3e3e3e"/><circle cx="1015.5" cy="344" r="3" fill="#ececec"/>
</g></svg>
<div class="t" style="left:858px;top:343px;color:#e0e0e0">Kind</div>
<div class="a" style="left:838px;top:357px;width:182px;height:1px;background:#464646"></div>
<div class="a" style="left:842px;top:362px;width:99px;height:14px;background:#434343;border-radius:1px"></div>
<div class="t" style="left:848px;top:364px;color:#e0e0e0">Multiply</div>
<svg class="a" style="left:930px;top:366px" width="8" height="6"><path d="M1 1 L3.5 3.5 L6 1" stroke="#bbb" fill="none" stroke-width="0.9"/></svg>
<div class="t" style="left:946px;top:364px;color:#cfcfcf">Opacity:</div>
<div class="a" style="left:978px;top:362px;width:27px;height:14px;background:#434343"></div>
<div class="a" style="left:1006px;top:362px;width:11px;height:14px;background:#434343"></div>
<div class="t" style="left:982px;top:364px;color:#e0e0e0">100%</div>
<svg class="a" style="left:1007px;top:366px" width="9" height="6"><path d="M1.5 1 L4.5 4 L7.5 1" stroke="#c0c0c0" fill="none" stroke-width="0.9"/></svg>
<div class="a" style="left:838px;top:378px;width:182px;height:1px;background:#464646"></div>
<div class="t" style="left:843px;top:385px;color:#cfcfcf">Lock:</div>
<div class="t" style="left:964px;top:385px;color:#cfcfcf">Fill:</div>
<div class="a" style="left:979px;top:383px;width:26px;height:15px;background:#434343"></div>
<div class="a" style="left:1006px;top:383px;width:11px;height:15px;background:#434343"></div>
<div class="t" style="left:983px;top:385px;color:#e0e0e0">74%</div>
<svg class="a" style="left:1007px;top:388px" width="9" height="6"><path d="M1.5 1 L4.5 4 L7.5 1" stroke="#c0c0c0" fill="none" stroke-width="0.9"/></svg>
<svg class="a" style="left:862px;top:380px" width="90" height="20" viewBox="862 380 90 20"><g fill="#e4e4e4">
<rect x="869" y="386" width="9" height="9" fill="none" stroke="#e4e4e4" stroke-width="0.9"/><rect x="869.5" y="386.5" width="2.7" height="2.7"/><rect x="874.9" y="386.5" width="2.7" height="2.7"/><rect x="872.2" y="389.2" width="2.7" height="2.7"/><rect x="869.5" y="391.9" width="2.7" height="2.7"/><rect x="874.9" y="391.9" width="2.7" height="2.7"/>
<path d="M895 385.5 L896.8 387 L890.5 393 L889 391.6 Z"/><path d="M888.5 392 L890.3 393.6 C889.6 396 887.8 397.2 885.5 397 C886.8 395.5 886.8 393 888.5 392Z"/>
<path d="M907 384.5 L909.3 387 L907.8 387 L907.8 390 L910.8 390 L910.8 388.5 L913.3 391 L910.8 393.5 L910.8 392 L907.8 392 L907.8 395 L909.3 395 L907 397.5 L904.7 395 L906.2 395 L906.2 392 L903.2 392 L903.2 393.5 L900.7 391 L903.2 388.5 L903.2 390 L906.2 390 L906.2 387 L904.7 387 Z"/>
<path d="M939 390 L939 388.5 C939 385.5 945 385.5 945 388.5 L945 390 L946 390 L946 396.5 L938 396.5 L938 390 Z M940.3 390 L943.7 390 L943.7 388.7 C943.7 387 940.3 387 940.3 388.7 Z"/><rect x="941.3" y="392" width="1.4" height="2.2" fill="#535353"/>
</g><g fill="none" stroke="#e4e4e4" stroke-width="0.9"><path d="M921 385 L921 396 M919 394.5 L931 394.5 M919 387.5 L926 387.5 C928 387.5 929.5 389 929.5 391 L929.5 396.5"/><path d="M927 385.5 L930.5 385.5 L930.5 389"/></g></svg>
<!-- layer rows -->
<div class="a" style="left:838px;top:401px;width:173px;height:88px;background:#535353"></div>
<div class="a" style="left:1011px;top:401px;width:9px;height:147px;background:#515151"></div><div class="a" style="left:1020px;top:401px;width:1px;height:147px;background:#4a4a4a"></div>
<div class="a" style="left:862px;top:424px;width:149px;height:22px;background:#666666"></div>
<div class="a" style="left:838px;top:423px;width:173px;height:1px;background:#474747"></div>
<div class="a" style="left:838px;top:446px;width:173px;height:1px;background:#474747"></div>
<div class="a" style="left:838px;top:467px;width:173px;height:1px;background:#474747"></div>
<div class="a" style="left:838px;top:488px;width:173px;height:1px;background:#474747"></div>
<div class="a" style="left:861px;top:401px;width:1px;height:88px;background:#474747"></div>
<svg class="a" style="left:838px;top:401px" width="186" height="90" viewBox="838 401 186 90">
<defs><pattern id="chk" x="866" y="407.5" width="5" height="5" patternUnits="userSpaceOnUse"><rect width="5" height="5" fill="#fff"/><rect width="2.5" height="2.5" fill="#cfcfcf"/><rect x="2.5" y="2.5" width="2.5" height="2.5" fill="#cfcfcf"/></pattern>
<g id="eye"><path d="M-5 0 C-3 -3.5 3 -3.5 5 0 C3 3.5 -3 3.5 -5 0 Z" fill="#ececec"/><circle cx="0" cy="0" r="1.9" fill="#535353"/><circle cx="0" cy="0" r="1" fill="#ececec"/></g></defs>
<use href="#eye" x="850" y="414"/><use href="#eye" x="850" y="436"/><use href="#eye" x="850" y="458"/>
<rect x="845" y="474" width="10" height="10" fill="none" stroke="#5e5e5e" stroke-width="0.8"/>
<rect x="866" y="407.5" width="23" height="13" fill="url(#chk)"/>
<rect x="866" y="429.5" width="23" height="13" fill="url(#chk)"/>
<path d="M864 431 L864 428 L867 428 M888 428 L891 428 L891 431 M864 441 L864 444 L867 444 M888 444 L891 444 L891 441" stroke="#e8e8e8" fill="none" stroke-width="0.9"/>
<rect x="871" y="451.5" width="12" height="12" fill="#fff"/>
<rect x="902" y="451" width="24" height="14" fill="#fff"/>
<path d="M893.5 452 C891.5 452 891.5 457 893.5 457 M895.5 452 C897.5 452 897.5 457 895.5 457 M893.5 458 C891.5 458 891.5 463 893.5 463 M895.5 458 C897.5 458 897.5 463 895.5 463 M894.5 455 L894.5 460" stroke="#e0e0e0" fill="none" stroke-width="1"/>
<rect x="866" y="472" width="23" height="14" fill="#fff"/>
<g style="filter:grayscale(0.8)"><svg x="866" y="472" width="23" height="14" viewBox="61 114 680 381"><use href="#fig"/></svg><svg x="866" y="407.5" width="23" height="13" viewBox="61 114 680 381"><use href="#fig"/></svg><svg x="866" y="429.5" width="23" height="13" viewBox="61 114 680 381"><use href="#fig"/></svg></g>
<path d="M995 431 L1001 431 L1001 437 M998 434 L1004 434 L1004 440 L998 440 Z" stroke="#dedede" fill="none" stroke-width="0.9"/><rect x="995" y="431" width="6" height="6" fill="none" stroke="#dedede" stroke-width="0.9"/><rect x="998.5" y="434.5" width="2.5" height="2.5" fill="#dedede"/>
</svg>
<div class="t" style="left:897px;top:409px;color:#e4e4e4">Subject cutout</div>
<div class="t" style="left:897px;top:431px;color:#e8e8e8">Subject cu...rop Shadow</div>
<div class="t" style="left:933px;top:453px;color:#e4e4e4">new background</div>
<div class="t" style="left:897px;top:475px;color:#e4e4e4">Layer 1</div>
<!-- layers bottom bar -->
<div class="a" style="left:838px;top:548px;width:186px;height:1px;background:#474747"></div>
<div class="a" style="left:838px;top:549px;width:186px;height:18px;background:#565656"></div>
<svg class="a" style="left:860px;top:549px" width="150" height="18" viewBox="860 549 150 18"><g fill="none" stroke="#9a9a9a" stroke-width="1.1"><rect x="866.5" y="555.5" width="5.5" height="5" rx="2.5"/><rect x="871" y="555.5" width="5.5" height="5" rx="2.5"/></g>
<text x="887" y="562" font-size="10" font-style="italic" font-family="Liberation Serif" fill="#e4e4e4">fx</text><rect x="897" y="563" width="1.6" height="1.2" fill="#e4e4e4"/>
<rect x="908" y="554" width="11" height="8" fill="#e4e4e4"/><ellipse cx="913.5" cy="558" rx="2.8" ry="2.5" fill="#535353"/>
<circle cx="935" cy="558" r="4" fill="none" stroke="#e4e4e4" stroke-width="1.1"/><path d="M938 555.2 A4 4 0 0 1 932 561 Z" fill="#e4e4e4"/><rect x="937.5" y="563" width="1.6" height="1.2" fill="#e4e4e4"/>
<path d="M951 554 L955 554 L956 555 L960.5 555 L960.5 562 L951 562 Z" fill="#e4e4e4"/>
<rect x="972.5" y="553.5" width="9" height="9" fill="none" stroke="#e4e4e4" stroke-width="1"/><path d="M977 556 L977 560 M975 558 L979 558" stroke="#e4e4e4" stroke-width="1"/>
<path d="M992.5 555 L1001.5 555 M995 555 L995 553.8 L999 553.8 L999 555 M993.5 556 L994.3 563 L999.7 563 L1000.5 556 Z M995.8 557 L995.8 561.5 M998.2 557 L998.2 561.5" fill="none" stroke="#e4e4e4" stroke-width="1"/>
</svg>
<svg class="a" style="left:808px;top:18px" width="216" height="10"><g fill="none" stroke="#e0e0e0" stroke-width="1.1"><path d="M20 3 L18 5 L20 7 M23 3 L21 5 L23 7"/><path d="M205 3 L207 5 L205 7 M208 3 L210 5 L208 7"/></g></svg>
</body></html>
